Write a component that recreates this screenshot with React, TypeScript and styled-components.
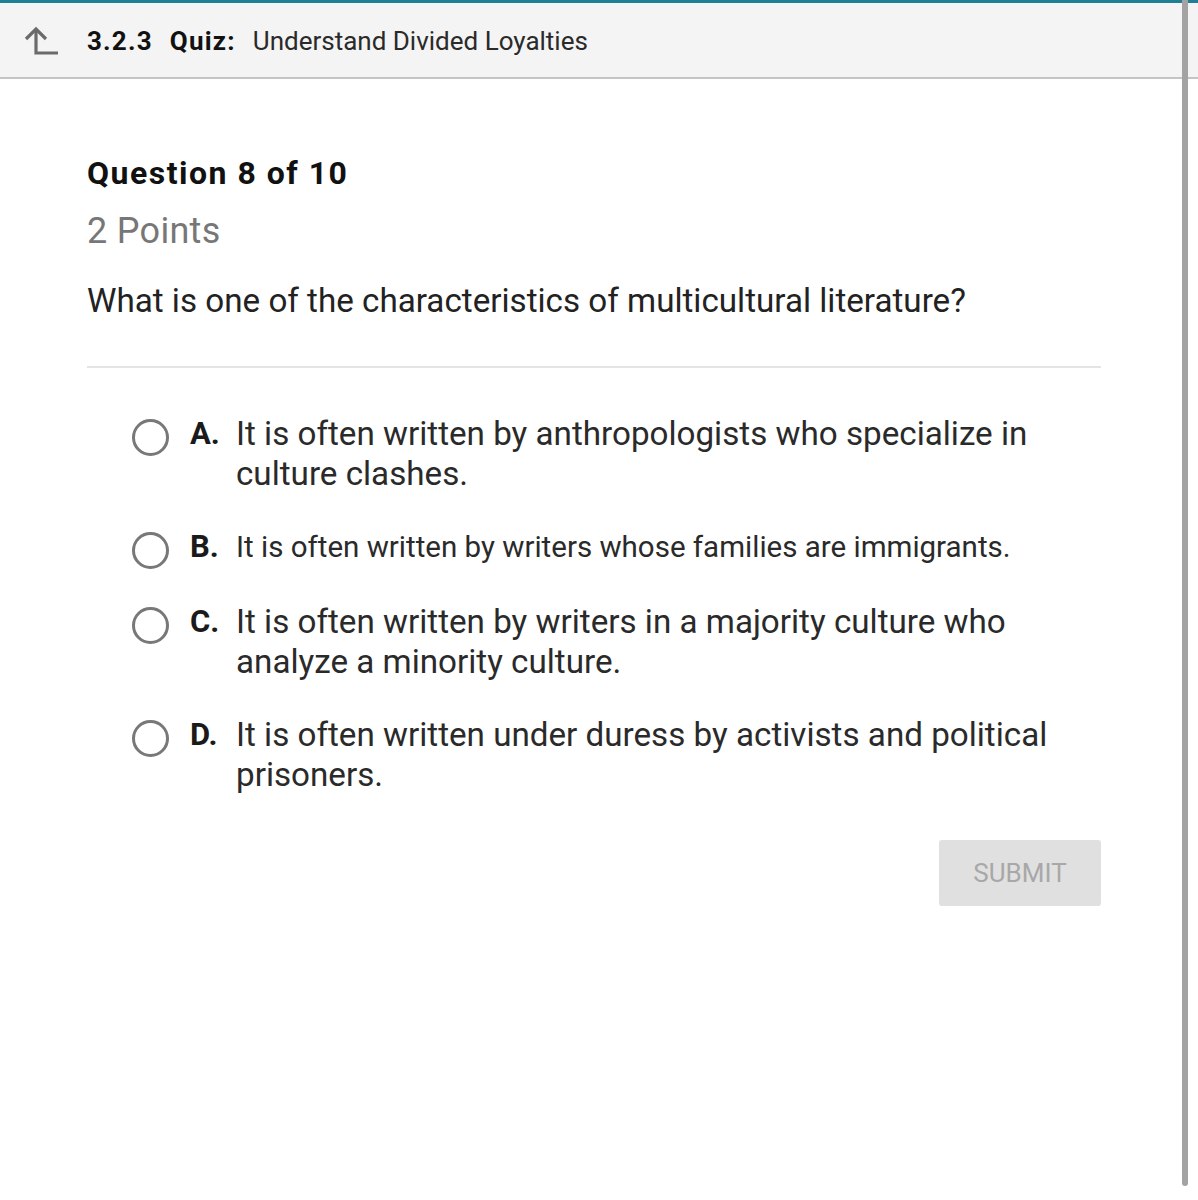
import * as React from 'react';
import styled, { createGlobalStyle } from 'styled-components';

const GlobalStyle = createGlobalStyle`
    html, body {
        margin: 0;
        padding: 0;
        background: #fff;
    }
    body {
        font-family: Roboto, "Liberation Sans", Arial, sans-serif;
        color: #222;
    }
`;

interface Choice {
    letter: string;
    text: string;
    small?: boolean;
}

const choices: Choice[] = [
    { letter: 'A', text: 'It is often written by anthropologists who specialize in culture clashes.' },
    { letter: 'B', text: 'It is often written by writers whose families are immigrants.', small: true },
    { letter: 'C', text: 'It is often written by writers in a majority culture who analyze a minority culture.' },
    { letter: 'D', text: 'It is often written under duress by activists and political prisoners.' }
];

function BackIcon() {
    return (
        <svg width="36" height="32" viewBox="0 0 36 32" fill="none">
            <path d="M12 4 L12 28 L34 28" stroke="#6b6b6b" strokeWidth="3.2" />
            <path d="M2 14 L12 4 L22 14" stroke="#6b6b6b" strokeWidth="3.2" />
        </svg>
    );
}

export default function App() {
    const [selected, setSelected] = React.useState<string | null>(null);

    return (
        <Page>
            <GlobalStyle />
            <Header>
                <BackButton>
                    <BackIcon />
                </BackButton>
                <Crumb>
                    <b>3.2.3</b>
                    <b>Quiz:</b>
                    <span>Understand Divided Loyalties</span>
                </Crumb>
            </Header>
            <Main>
                <QuestionNumber>Question 8 of 10</QuestionNumber>
                <Points>2 Points</Points>
                <Prompt>What is one of the characteristics of multicultural literature?</Prompt>
                <Divider />
                <ChoiceList>
                    {choices.map(choice => (
                        <ChoiceRow key={choice.letter} onClick={() => setSelected(choice.letter)}>
                            <Radio checked={selected === choice.letter} />
                            <Letter>{choice.letter}.</Letter>
                            <ChoiceText small={choice.small}>{choice.text}</ChoiceText>
                        </ChoiceRow>
                    ))}
                </ChoiceList>
                <Actions>
                    <SubmitButton disabled={!selected}>SUBMIT</SubmitButton>
                </Actions>
            </Main>
            <ScrollThumb />
        </Page>
    );
}

const Page = styled.div`
    min-height: 1200px;
    position: relative;
`;

const Header = styled.header`
    display: flex;
    align-items: center;
    height: 74px;
    background: #f4f4f4;
    border-top: 3px solid #1f7f94;
    border-bottom: 2px solid #c4c4c4;
`;

const BackButton = styled.div`
    display: flex;
    width: 87px;
    padding-left: 24px;
    box-sizing: border-box;
    padding-top: 2px;
`;

const Crumb = styled.div`
    display: flex;
    gap: 17px;
    font-size: 26px;
    color: #2a2a2a;
    padding-top: 2px;

    b {
        font-weight: 700;
        letter-spacing: 1.2px;
        color: #111;
    }
`;

const Main = styled.main`
    padding: 74px 97px 0 87px;
`;

const QuestionNumber = styled.h1`
    margin: 0;
    font-size: 32px;
    font-weight: 700;
    letter-spacing: 1.5px;
    line-height: 40px;
    color: #111;
`;

const Points = styled.div`
    margin-top: 18px;
    font-size: 36px;
    letter-spacing: 0.3px;
    line-height: 40px;
    color: #777;
`;

const Prompt = styled.p`
    margin: 30px 0 0;
    font-size: 33.2px;
    line-height: 40px;
    color: #222;
`;

const Divider = styled.hr`
    margin: 45px 0 0;
    border: none;
    border-top: 2px solid #e4e4e4;
`;

const ChoiceList = styled.div`
    display: flex;
    flex-direction: column;
    gap: 33px;
    padding: 46px 0 0 45px;
`;

const ChoiceRow = styled.label`
    display: flex;
    align-items: flex-start;
    cursor: pointer;
`;

const Radio = styled.span<{ checked: boolean }>`
    flex: none;
    width: 37px;
    height: 37px;
    box-sizing: border-box;
    border-radius: 50%;
    border: 3px solid #787878;
    margin-top: 5px;
    background: ${p => (p.checked ? 'radial-gradient(circle, #1f7f94 45%, #fff 50%)' : '#fff')};
`;

const Letter = styled.span`
    flex: none;
    width: 46px;
    margin-left: 21px;
    font-size: 31px;
    font-weight: 700;
    line-height: 40px;
    color: #1a1a1a;
`;

const ChoiceText = styled.span<{ small?: boolean }>`
    flex: 1;
    font-size: ${p => (p.small ? '29.5px' : '33.2px')};
    line-height: 40px;
    color: #2a2a2a;
`;

const Actions = styled.div`
    display: flex;
    justify-content: flex-end;
    margin-top: 45px;
`;

const SubmitButton = styled.button`
    width: 162px;
    height: 66px;
    border: none;
    border-radius: 3px;
    background: #e0e0e0;
    color: #a8a8a8;
    font-family: Roboto, "Liberation Sans", Arial, sans-serif;
    font-size: 26px;
    cursor: default;
`;

const ScrollThumb = styled.div`
    position: fixed;
    top: 0;
    left: 1182px;
    width: 6px;
    height: 1186px;
    background: #a3a3a3;
    border-radius: 0 0 3px 3px;
`;
